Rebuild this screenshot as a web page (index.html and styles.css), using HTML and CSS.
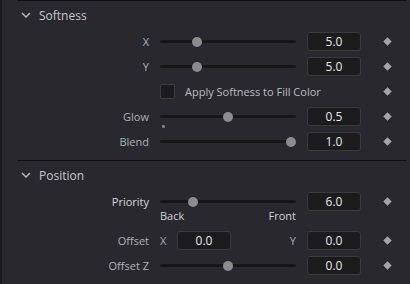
FILE: index.html
```html
<!DOCTYPE html>
<html>
<head>
<meta charset="utf-8">
<link rel="stylesheet" href="styles.css">
</head>
<body>
<div class="panel">
  <div class="section section-first">
    <div class="section-head">
      <svg class="chev" width="10" height="6" viewBox="0 0 10 6"><path d="M1 1 L5 5 L9 1" fill="none" stroke="#b4b4b8" stroke-width="1.5"/></svg>
      <span>Softness</span>
    </div>
    <div class="row">
      <span class="label">X</span>
      <div class="slider"><div class="knob" style="left:27%"></div></div>
      <div class="value">5.0</div>
      <svg class="key" width="9" height="9" viewBox="0 0 9 9"><polygon points="4.5,0.3 8.7,4.5 4.5,8.7 0.3,4.5"/></svg>
    </div>
    <div class="row">
      <span class="label">Y</span>
      <div class="slider"><div class="knob" style="left:27%"></div></div>
      <div class="value">5.0</div>
      <svg class="key" width="9" height="9" viewBox="0 0 9 9"><polygon points="4.5,0.3 8.7,4.5 4.5,8.7 0.3,4.5"/></svg>
    </div>
    <div class="row">
      <span class="label"></span>
      <div class="check-cell"><span class="checkbox"></span><span class="check-text">Apply Softness to Fill Color</span></div>
      <svg class="key" width="9" height="9" viewBox="0 0 9 9"><polygon points="4.5,0.3 8.7,4.5 4.5,8.7 0.3,4.5"/></svg>
    </div>
    <div class="row">
      <span class="label">Glow</span>
      <div class="slider"><div class="knob" style="left:50%"></div><span class="default-dot"></span></div>
      <div class="value">0.5</div>
      <svg class="key" width="9" height="9" viewBox="0 0 9 9"><polygon points="4.5,0.3 8.7,4.5 4.5,8.7 0.3,4.5"/></svg>
    </div>
    <div class="row">
      <span class="label">Blend</span>
      <div class="slider"><div class="knob" style="left:96.4%"></div></div>
      <div class="value">1.0</div>
      <svg class="key" width="9" height="9" viewBox="0 0 9 9"><polygon points="4.5,0.3 8.7,4.5 4.5,8.7 0.3,4.5"/></svg>
    </div>
  </div>
  <div class="section">
    <div class="section-head">
      <svg class="chev" width="10" height="6" viewBox="0 0 10 6"><path d="M1 1 L5 5 L9 1" fill="none" stroke="#b4b4b8" stroke-width="1.5"/></svg>
      <span>Position</span>
    </div>
    <div class="row">
      <span class="label label-bright">Priority</span>
      <div class="slider"><div class="knob" style="left:24.5%"></div></div>
      <div class="value">6.0</div>
      <svg class="key" width="9" height="9" viewBox="0 0 9 9"><polygon points="4.5,0.3 8.7,4.5 4.5,8.7 0.3,4.5"/></svg>
    </div>
    <div class="row ticks">
      <span class="label"></span>
      <div class="tick-cell"><span>Back</span><span>Front</span></div>
    </div>
    <div class="row">
      <span class="label">Offset</span>
      <div class="pair-cell">
        <span class="axis">X</span>
        <div class="value">0.0</div>
        <span class="axis axis-y">Y</span>
      </div>
      <div class="value">0.0</div>
      <svg class="key" width="9" height="9" viewBox="0 0 9 9"><polygon points="4.5,0.3 8.7,4.5 4.5,8.7 0.3,4.5"/></svg>
    </div>
    <div class="row">
      <span class="label">Offset Z</span>
      <div class="slider"><div class="knob" style="left:50%"></div></div>
      <div class="value">0.0</div>
      <svg class="key" width="9" height="9" viewBox="0 0 9 9"><polygon points="4.5,0.3 8.7,4.5 4.5,8.7 0.3,4.5"/></svg>
    </div>
  </div>
</div>
</body>
</html>
```
FILE: styles.css
```css
html, body {
  margin: 0;
  padding: 0;
}
body {
  background: #28282e;
  width: 410px;
  height: 284px;
  overflow: hidden;
  font-family: "Open Sans", "Noto Sans", sans-serif;
}
.panel {
  border-left: 2px solid #1b1b1f;
  height: 284px;
  box-sizing: border-box;
}
.section {
  margin-left: 15px;
  margin-right: 3px;
  border-top: 1px solid #111113;
}
.section-first {
  padding-bottom: 6px;
}
.section-head {
  height: 28px;
  display: flex;
  align-items: center;
  padding-left: 4px;
  font-size: 12px;
  color: #c8c8cc;
}
.chev {
  margin-right: 8px;
  display: block;
}
.row {
  display: grid;
  grid-template-columns: 132px 136px 54px 30px;
  column-gap: 11px;
  height: 25px;
  align-items: center;
}
.label {
  text-align: right;
  font-size: 11px;
  color: #b0b0b4;
  white-space: nowrap;
}
.label-bright {
  color: #d8d8dc;
}
.slider {
  position: relative;
  height: 25px;
}
.slider::before {
  content: "";
  position: absolute;
  left: 0;
  right: 0;
  top: 50%;
  height: 3px;
  margin-top: -1.5px;
  border-radius: 2px;
  background: #17171a;
}
.knob {
  position: absolute;
  top: 50%;
  width: 10px;
  height: 10px;
  margin: -5px 0 0 -5px;
  border-radius: 50%;
  background: #8c8c8e;
}
.default-dot {
  position: absolute;
  left: 2px;
  top: 50%;
  margin-top: 8px;
  width: 3px;
  height: 3px;
  border-radius: 1px;
  background: #7c7c80;
}
.value {
  box-sizing: border-box;
  height: 19px;
  border: 1px solid #3a3a3e;
  border-radius: 3px;
  background: #1c1c1f;
  color: #e8e8ea;
  font-size: 12px;
  line-height: 17px;
  text-align: center;
}
.key {
  justify-self: center;
  display: block;
  fill: #a4a4a8;
}
.check-cell {
  grid-column: 2 / span 2;
  display: flex;
  align-items: center;
  gap: 10px;
}
.checkbox {
  box-sizing: border-box;
  width: 15px;
  height: 15px;
  border: 1px solid #3c3c40;
  border-radius: 2px;
  background: #1c1c1f;
}
.check-text {
  font-size: 11px;
  color: #bcbcc0;
  white-space: nowrap;
}
.ticks {
  height: 14px;
  margin-top: -5px;
  margin-bottom: 5px;
}
.tick-cell {
  display: flex;
  justify-content: space-between;
  font-size: 11px;
  color: #d0d0d4;
  line-height: 14px;
}
.pair-cell {
  display: flex;
  align-items: center;
}
.pair-cell .value {
  width: 54px;
  margin-left: 10px;
}
.axis {
  font-size: 11px;
  color: #a8a8ac;
  width: 7px;
}
.axis-y {
  margin-left: auto;
  text-align: right;
}
```
